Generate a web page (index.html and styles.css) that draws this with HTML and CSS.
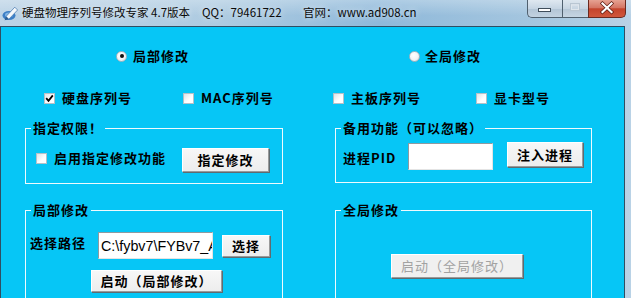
FILE: index.html
```html
<!DOCTYPE html>
<html lang="zh-CN">
<head>
<meta charset="utf-8">
<title>硬盘物理序列号修改专家</title>
<link rel="stylesheet" href="styles.css">
</head>
<body>
<div class="window">
  <div class="titlebar">
    <svg class="appicon" viewBox="0 0 17 17" width="17" height="17">
      <ellipse cx="7" cy="11.5" rx="6.5" ry="4.5" fill="#3d7fc6"/>
      <ellipse cx="7" cy="11" rx="4" ry="2.4" fill="#7fb4e6"/>
      <path d="M4 12.5 L12.8 3.2 L15.6 6 L6.8 15.2 Z" fill="#f6f9fc" stroke="#4f7fb2" stroke-width="0.8"/>
      <path d="M4 12.5 L6.8 15.2 L2.6 16.2 Z" fill="#2b5d94"/>
    </svg>
    <span class="title t-name">硬盘物理序列号修改专家 4.7版本</span>
    <span class="title t-qq">QQ：79461722</span>
    <span class="title">官网：www.ad908.cn</span>
    <div class="controls">
      <div class="ctl ctl-min">
        <svg viewBox="0 0 35 18" width="35" height="18"><rect x="11.5" y="9.5" width="12" height="3" fill="#fff" stroke="#3f4d5a"/></svg>
      </div>
      <div class="ctl ctl-max">
        <svg viewBox="0 0 26 18" width="26" height="18"><rect x="8.5" y="4.5" width="9" height="7" fill="none" stroke="#b9c6d2"/><rect x="9.5" y="6" width="7" height="4.5" fill="none" stroke="#dfe6ec"/></svg>
      </div>
      <div class="ctl ctl-close">
        <svg viewBox="0 0 38 18" width="38" height="18"><path d="M14.5 4.5 L23.5 13 M23.5 4.5 L14.5 13" stroke="#5a1a10" stroke-width="3.6" stroke-linecap="square"/><path d="M14.5 4.5 L23.5 13 M23.5 4.5 L14.5 13" stroke="#fff" stroke-width="2.2" stroke-linecap="square"/></svg>
      </div>
    </div>
  </div>

  <div class="client">
    <div class="grid">
      <div class="row row-radio">
        <label class="opt opt-radio-l"><span class="radio checked"></span><span class="lbl">局部修改</span></label>
      </div>
      <div class="row row-radio">
        <label class="opt opt-radio-r"><span class="radio"></span><span class="lbl">全局修改</span></label>
      </div>

      <div class="row row-check">
        <label class="opt chk-a"><span class="box checked"><svg viewBox="0 0 11 11" width="11" height="11"><path d="M2.2 5.2 L4.5 7.8 L8.8 2.4" fill="none" stroke="#000" stroke-width="1.8"/></svg></span><span class="lbl">硬盘序列号</span></label>
        <label class="opt"><span class="box"></span><span class="lbl">MAC序列号</span></label>
      </div>
      <div class="row row-check">
        <label class="opt chk-c"><span class="box"></span><span class="lbl">主板序列号</span></label>
        <label class="opt"><span class="box"></span><span class="lbl">显卡型号</span></label>
      </div>

      <fieldset class="group g-perm">
        <legend>指定权限！</legend>
        <div class="gline">
          <label class="opt perm-check"><span class="box"></span><span class="lbl">启用指定修改功能</span></label>
          <button class="btn btn-perm">指定修改</button>
        </div>
      </fieldset>
      <fieldset class="group g-spare">
        <legend>备用功能（可以忽略）</legend>
        <div class="gline">
          <span class="lbl pid-lbl">进程PID</span>
          <input class="field pid-field" type="text" value="">
          <button class="btn btn-inject">注入进程</button>
        </div>
      </fieldset>

      <fieldset class="group g-local">
        <legend>局部修改</legend>
        <div class="gline">
          <span class="lbl path-lbl">选择路径</span>
          <input class="field path-field" type="text" value="C:\fybv7\FYBv7_All\FYBv7.exe">
          <button class="btn btn-pick">选择</button>
        </div>
        <div class="gline">
          <button class="btn btn-start-local">启动（局部修改）</button>
        </div>
      </fieldset>
      <fieldset class="group g-global">
        <legend>全局修改</legend>
        <div class="gline">
          <button class="btn btn-start-global" disabled>启动（全局修改）</button>
        </div>
      </fieldset>
    </div>
  </div>
</div>
</body>
</html>
```

FILE: styles.css
```css
* { box-sizing: border-box; }
html, body { margin: 0; padding: 0; }
body {
  width: 631px;
  height: 298px;
  overflow: hidden;
  font-family: "Noto Sans CJK SC", "Noto Sans", sans-serif;
}

.window {
  width: 631px;
  height: 298px;
  display: flex;
  flex-direction: column;
  background: linear-gradient(to right, #bcd3e6 0%, #aecbe1 35%, #8fb9da 60%, #a5c6df 85%, #b9d2e6 100%);
}

/* ---------- title bar ---------- */
.titlebar {
  height: 26px;
  flex: 0 0 26px;
  display: flex;
  align-items: flex-start;
  background: linear-gradient(to bottom, rgba(255,255,255,0.28), rgba(255,255,255,0) 60%);
}
.appicon {
  margin: 4px 3px 0 2px;
  flex: 0 0 17px;
}
.title {
  font-size: 11.5px;
  line-height: 16px;
  margin-top: 4px;
  color: #0a0a0a;
  white-space: nowrap;
  text-shadow: 0 0 6px rgba(255,255,255,0.8);
}
.t-name { flex: 0 0 180px; }
.t-qq { flex: 0 0 101px; }

.controls {
  margin-left: auto;
  margin-right: 5px;
  display: flex;
  height: 18px;
}
.ctl {
  height: 18px;
  border: 1px solid #50606e;
  border-top: none;
}
.ctl svg { display: block; margin: -1px 0 0 -1px; }
.ctl-min {
  width: 35px;
  border-right: none;
  border-bottom-left-radius: 5px;
  background: linear-gradient(to bottom, #dfe8f0 0%, #c6d5e3 50%, #b2c4d5 51%, #c3d3e1 100%);
}
.ctl-max {
  width: 26px;
  border-right: none;
  background: linear-gradient(to bottom, #dde6ee 0%, #c7d5e2 50%, #b5c6d6 51%, #c6d5e2 100%);
}
.ctl-close {
  width: 38px;
  border-bottom-right-radius: 5px;
  border-color: #6a2a20;
  background: linear-gradient(to bottom, #e6a292 0%, #d57664 45%, #c4442c 52%, #d0573c 100%);
}

/* ---------- client area ---------- */
.client {
  flex: 1;
  margin-right: 6px;
  border: 1px solid #2f4e63;
  border-bottom: none;
  background: #06c6f6;
  padding-left: 24px;
  overflow: hidden;
}
.grid {
  display: grid;
  grid-template-columns: 258px 257px;
  column-gap: 52px;
  align-items: start;
}

.row {
  display: flex;
  height: 16px;
}
.row-radio { margin-top: 21px; }
.row-check { margin-top: 26px; }

.opt {
  display: flex;
  align-items: center;
  height: 16px;
  gap: 7px;
}
.lbl {
  font-size: 13px;
  font-weight: 700;
  letter-spacing: 1px;
  line-height: 16px;
  color: #000;
  white-space: nowrap;
}

.opt-radio-l { margin-left: 91px; gap: 6px; }
.opt-radio-r { margin-left: 74px; gap: 5px; }
.chk-a { margin-left: 19px; width: 139px; }
.chk-c { margin-left: -2px; width: 143px; }

.radio {
  width: 11px;
  height: 11px;
  border-radius: 50%;
  border: 1px solid #a7b4be;
  background: radial-gradient(circle at 40% 35%, #ffffff 0%, #f2f4f6 55%, #d3d9de 100%);
  display: flex;
  align-items: center;
  justify-content: center;
  flex: 0 0 11px;
}
.radio.checked::after {
  content: "";
  width: 4px;
  height: 4px;
  border-radius: 50%;
  background: #111;
}

.box {
  width: 11px;
  height: 11px;
  flex: 0 0 11px;
  border: 1px solid #b6c0c8;
  background: linear-gradient(135deg, #dfe3e6 0%, #ffffff 60%, #ffffff 100%);
  position: relative;
}
.box svg { position: absolute; left: -1px; top: -1px; }

/* ---------- form controls ---------- */
.btn {
  padding: 0;
  font-family: "Noto Sans CJK SC", sans-serif;
  font-size: 13px;
  font-weight: 700;
  letter-spacing: 1px;
  line-height: 16px;
  color: #000;
  background: linear-gradient(to bottom, #f7f7f7 0%, #ededed 100%);
  border: 1px solid;
  border-color: #ffffff #9a9a9a #9a9a9a #ffffff;
  box-shadow: 1px 1px 0 #5f6b70;
  border-radius: 0;
  white-space: nowrap;
}
.btn[disabled] {
  color: #a2a2a2;
  font-weight: 400;
  background: #f0f0f0;
}

.field {
  padding: 0 0 0 2px;
  font-family: "Liberation Sans", Arial, sans-serif;
  font-size: 13px;
  color: #000;
  background: #fff;
  border: 1px solid;
  border-color: #8e9aa0 #e4e4e4 #e4e4e4 #8e9aa0;
  outline: none;
  border-radius: 0;
}

/* ---------- group boxes ---------- */
.group {
  margin: 0;
  padding: 0;
  border: 1px solid #eefafe;
  min-width: 0;
}
.group legend {
  margin-left: 5px;
  padding: 0 2px;
  font-size: 13px;
  font-weight: 700;
  letter-spacing: 1px;
  line-height: 16px;
  color: #000;
}
.g-perm { margin-top: 14px; height: 64px; }
.g-spare { margin-top: 14px; height: 63px; }
.g-local, .g-global { margin-top: 18px; height: 130px; }

.gline {
  display: flex;
  align-items: flex-start;
}

.perm-check { margin: 14px 0 0 10px; width: 146px; }
.btn-perm { margin-top: 12px; width: 87px; height: 24px; }

.pid-lbl { margin: 14px 0 0 7px; width: 65px; }
.pid-field { margin-top: 7px; width: 85px; height: 27px; }
.btn-inject { margin: 6px 0 0 14px; width: 76px; height: 25px; }

.path-lbl { margin: 17px 0 0 4px; width: 68px; }
.path-field { margin-top: 14px; width: 115px; height: 27px; font-size: 14.3px; }
.btn-pick { margin: 17px 0 0 9px; width: 48px; height: 22px; }
.btn-start-local { margin: 11px 0 0 65px; width: 131px; height: 22px; }

.btn-start-global { margin: 36px 0 0 55px; width: 132px; height: 24px; }
```
